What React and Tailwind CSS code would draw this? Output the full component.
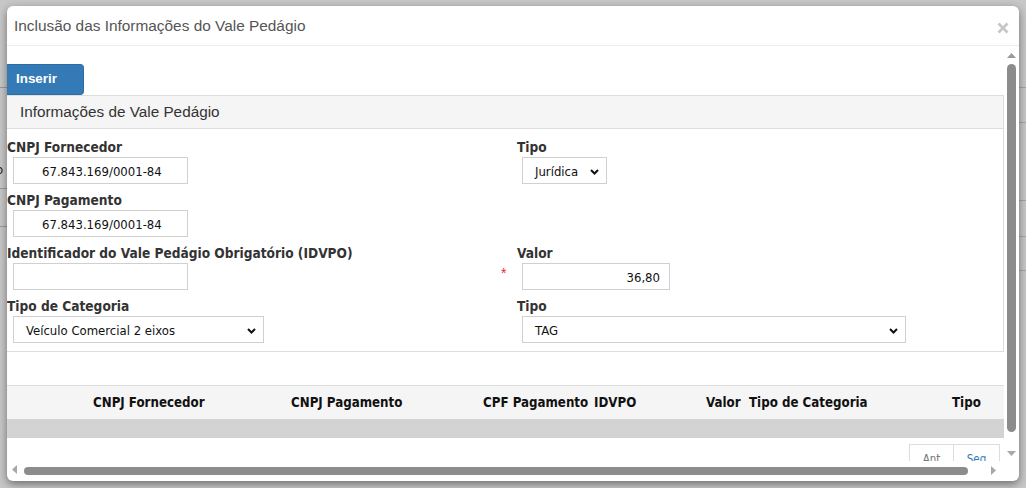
import React from "react";

const tah = "font-['DejaVu_Sans_Condensed','DejaVu_Sans',sans-serif]";
const ari = "font-['Liberation_Sans',Arial,sans-serif]";

function Chevron() {
  return (
    <svg width="9" height="6" viewBox="0 0 9 6" className="shrink-0">
      <polyline points="1,1 4.5,4.5 8,1" fill="none" stroke="#111" strokeWidth="2" />
    </svg>
  );
}

function Label({ children }) {
  return (
    <div className={`${tah} h-[20px] leading-[22px] text-[13.6px] font-bold text-[#333] whitespace-nowrap`}>
      {children}
    </div>
  );
}

function Input({ w, value, align = "left", pl = "pl-[28px]", pr = "pr-[9px]", ml = "ml-[6px]" }) {
  return (
    <div
      className={`${ml} mt-[1px] h-[27px] border border-[#d0d0d0] bg-white flex items-center pt-[2px] ${tah} text-[13px] text-[#111] ${
        align === "right" ? `justify-end ${pr}` : pl
      }`}
      style={{ width: w }}
    >
      {value}
    </div>
  );
}

function Select({ w, value, ml = "ml-[6px]" }) {
  return (
    <div
      className={`${ml} mt-[1px] h-[27px] border border-[#d0d0d0] bg-white flex items-center justify-between pl-[12px] pr-[7px] pt-[2px] ${tah} text-[13px] text-[#111]`}
      style={{ width: w }}
    >
      <span>{value}</span>
      <Chevron />
    </div>
  );
}

export default function App() {
  return (
    <div className="relative w-[1026px] h-[488px] bg-[#c7c7c7] overflow-hidden pt-[6px] pl-[7px]">
      {/* underlying page hints */}
      <div className="absolute left-0 top-[87px] w-[7px] h-px bg-[#9a9a9a]" />
      <div className="absolute left-0 top-[188px] w-[7px] h-px bg-[#9a9a9a]" />
      <div className="absolute left-0 top-[226px] w-[7px] h-px bg-[#9a9a9a]" />
      <div className={`absolute left-[-4px] top-[160px] text-[13px] ${tah} text-[#222]`}>o</div>
      <div className="absolute right-0 top-[87px] w-[7px] h-px bg-[#a5a5a5]" />
      <div className="absolute right-0 top-[122px] w-[7px] h-px bg-[#a5a5a5]" />
      <div className="absolute right-0 top-[200px] w-[7px] h-px bg-[#a5a5a5]" />
      <div className="absolute right-0 top-[236px] w-[7px] h-px bg-[#a5a5a5]" />
      <div className="absolute right-0 top-[270px] w-[7px] h-px bg-[#a5a5a5]" />

      {/* modal */}
      <div className="relative w-[1012px] h-[475px] bg-white rounded-[6px] shadow-[0_3px_9px_rgba(0,0,0,0.45)] flex flex-col overflow-hidden">
        {/* header */}
        <div className="h-[40px] shrink-0 border-b border-[#ececec] flex items-center justify-between pl-[7px] pr-[10px]">
          <span className={`${ari} text-[15.4px] text-[#555]`}>Inclusão das Informações do Vale Pedágio</span>
          <svg width="12" height="12" viewBox="0 0 12 12" className="mt-[4px]">
            <line x1="1.5" y1="1.5" x2="10.5" y2="10.5" stroke="#c6c6c6" strokeWidth="2.6" />
            <line x1="10.5" y1="1.5" x2="1.5" y2="10.5" stroke="#c6c6c6" strokeWidth="2.6" />
          </svg>
        </div>

        {/* body */}
        <div className="flex h-[415px] shrink-0">
          <div className="w-[998px] shrink-0 overflow-hidden pt-[18px]">
            <div className={`w-[77px] h-[31px] bg-[#337ab7] border border-l-0 border-[#2e6da4] rounded-r-[4px] flex items-center pl-[9px] ${ari} text-[13.4px] font-bold text-white`}>
              Inserir
            </div>

            {/* panel */}
            <div className="w-[997px] border border-l-0 border-[#dddddd]">
              <div className={`h-[33px] bg-[#f5f5f5] border-b border-[#dddddd] flex items-center pl-[13px] ${ari} text-[15.3px] text-[#333]`}>
                Informações de Vale Pedágio
              </div>
              <div className="grid grid-cols-[510px_1fr] gap-y-[5px] pt-[7px] pb-[8px]">
                <div>
                  <Label>CNPJ Fornecedor</Label>
                  <Input w="175px" value="67.843.169/0001-84" />
                </div>
                <div>
                  <Label>Tipo</Label>
                  <Select w="85px" value="Jurídica" ml="ml-[5px]" />
                </div>

                <div>
                  <Label>CNPJ Pagamento</Label>
                  <Input w="175px" value="67.843.169/0001-84" />
                </div>
                <div />

                <div>
                  <Label>Identificador do Vale Pedágio Obrigatório (IDVPO)</Label>
                  <Input w="175px" value="" />
                </div>
                <div>
                  <Label>Valor</Label>
                  <div className="relative">
                    <span className={`absolute left-[-16px] top-[0px] ${ari} text-[14px] text-[#e8242c]`}>*</span>
                    <Input w="148px" value="36,80" align="right" ml="ml-[5px]" />
                  </div>
                </div>

                <div>
                  <Label>Tipo de Categoria</Label>
                  <Select w="251px" value="Veículo Comercial 2 eixos" />
                </div>
                <div>
                  <Label>Tipo</Label>
                  <Select w="384px" value="TAG" ml="ml-[5px]" />
                </div>
              </div>
            </div>

            {/* table */}
            <div className="mt-[33px] w-[997px] border-t border-[#dddddd]">
              <div className={`h-[33px] bg-[#f5f5f5] flex items-center ${tah} text-[13.2px] font-bold text-[#111] whitespace-nowrap`}>
                <div className="w-[86px] shrink-0" />
                <div className="w-[198px] shrink-0">CNPJ Fornecedor</div>
                <div className="w-[192px] shrink-0">CNPJ Pagamento</div>
                <div className="w-[111px] shrink-0">CPF Pagamento</div>
                <div className="w-[112px] shrink-0">IDVPO</div>
                <div className="w-[43px] shrink-0">Valor</div>
                <div className="w-[203px] shrink-0">Tipo de Categoria</div>
                <div className="shrink-0">Tipo</div>
              </div>
              <div className="h-[19px] bg-[#d3d3d3]" />
              <div className="flex justify-end pr-[4px] mt-[6px]">
                <div className={`w-[45px] h-[30px] border border-[#dddddd] bg-white flex items-center justify-center pt-[2px] ${tah} text-[11.5px] text-[#777]`}>
                  Ant
                </div>
                <div className={`w-[46px] h-[30px] border border-l-0 border-[#dddddd] bg-white flex items-center justify-center pt-[2px] ${tah} text-[11.5px] text-[#337ab7]`}>
                  Seg
                </div>
              </div>
            </div>
          </div>

          {/* vertical scrollbar */}
          <div className="flex-1 flex flex-col items-center pr-[1px]">
            <svg width="9" height="5" viewBox="0 0 9 5" className="mt-[7px]">
              <polygon points="0,5 4.5,0 9,5" fill="#9a9a9a" />
            </svg>
            <div className="mt-[6px] w-[9px] h-[368px] rounded-full bg-[#8c8c8c]" />
            <svg width="9" height="5" viewBox="0 0 9 5" className="mt-[19px]">
              <polygon points="0,0 4.5,5 9,0" fill="#a8a8a8" />
            </svg>
          </div>
        </div>

        {/* horizontal scrollbar */}
        <div className="h-[16px] shrink-0 flex items-center pl-[5px]">
          <svg width="5" height="9" viewBox="0 0 5 9">
            <polygon points="5,0 0,4.5 5,9" fill="#a8a8a8" />
          </svg>
          <div className="ml-[7px] mt-[4px] w-[944px] h-[8px] rounded-full bg-[#8c8c8c]" />
          <svg width="5" height="9" viewBox="0 0 5 9" className="ml-[23px] mt-[2px]">
            <polygon points="0,0 5,4.5 0,9" fill="#a8a8a8" />
          </svg>
        </div>
      </div>
    </div>
  );
}
